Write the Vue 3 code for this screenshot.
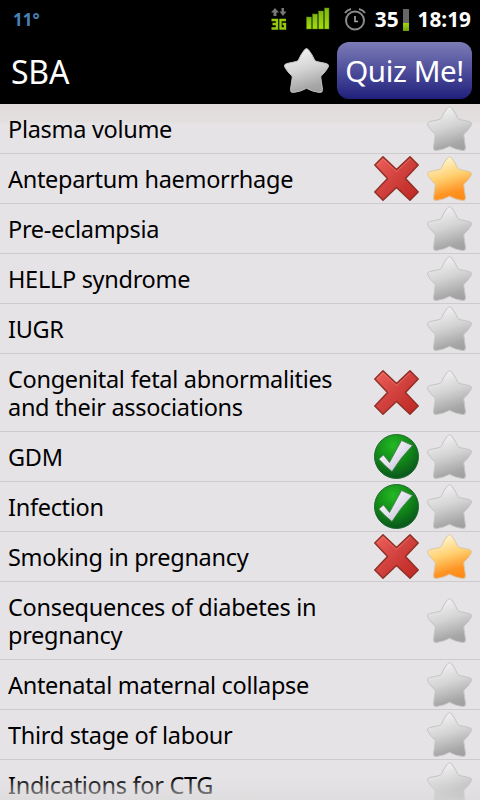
<script setup>
import { ref } from 'vue';

const temperature = ref('11°');
const battery = ref(35);
const title = ref('SBA');

const topics = ref([
  { id: 1, name: 'Plasma volume', result: null, starred: false },
  { id: 2, name: 'Antepartum haemorrhage', result: 'wrong', starred: true },
  { id: 3, name: 'Pre-eclampsia', result: null, starred: false },
  { id: 4, name: 'HELLP syndrome', result: null, starred: false },
  { id: 5, name: 'IUGR', result: null, starred: false },
  { id: 6, name: 'Congenital fetal abnormalities and their associations', result: 'wrong', starred: false },
  { id: 7, name: 'GDM', result: 'right', starred: false },
  { id: 8, name: 'Infection', result: 'right', starred: false },
  { id: 9, name: 'Smoking in pregnancy', result: 'wrong', starred: true },
  { id: 10, name: 'Consequences of diabetes in pregnancy', result: null, starred: false },
  { id: 11, name: 'Antenatal maternal collapse', result: null, starred: false },
  { id: 12, name: 'Third stage of labour', result: null, starred: false },
  { id: 13, name: 'Indications for CTG', result: null, starred: false }
]);

const toggleStar = (topic) => {
  topic.starred = !topic.starred;
};
</script>

<template>
  <div class="screen">
    <!-- shared gradients and shapes -->
    <svg class="defs" width="0" height="0">
      <defs>
        <linearGradient id="silver" x1="0.35" y1="0" x2="0.65" y2="1">
          <stop offset="0" stop-color="#f4f4f4" />
          <stop offset="0.45" stop-color="#d4d4d4" />
          <stop offset="0.85" stop-color="#a8a8a8" />
          <stop offset="1" stop-color="#a0a0a0" />
        </linearGradient>
        <linearGradient id="gold" x1="0.35" y1="0" x2="0.65" y2="1">
          <stop offset="0" stop-color="#fff8d8" />
          <stop offset="0.45" stop-color="#ffd070" />
          <stop offset="0.8" stop-color="#ff9424" />
          <stop offset="1" stop-color="#ff8a18" />
        </linearGradient>
        <linearGradient id="red" x1="0" y1="0" x2="1" y2="1">
          <stop offset="0" stop-color="#f0625e" />
          <stop offset="0.5" stop-color="#d0403c" />
          <stop offset="1" stop-color="#bd2622" />
        </linearGradient>
        <radialGradient id="green" cx="0.42" cy="0.25" r="0.72">
          <stop offset="0" stop-color="#24b824" />
          <stop offset="0.55" stop-color="#128a18" />
          <stop offset="1" stop-color="#0a5a1c" />
        </radialGradient>
        <linearGradient id="tick" x1="0" y1="0" x2="1" y2="1">
          <stop offset="0" stop-color="#ffffff" />
          <stop offset="0.5" stop-color="#e4e2ee" />
          <stop offset="1" stop-color="#b4b0c4" />
        </linearGradient>
        <linearGradient id="bars" x1="0" y1="0" x2="0" y2="1">
          <stop offset="0" stop-color="#7fb80e" />
          <stop offset="1" stop-color="#a5dd08" />
        </linearGradient>
        <symbol id="star" viewBox="0 0 45 45">
          <path d="M20.300 2Q22.500 -0.800 24.700 2Q28.500 7 30.500 11.800Q31.200 13.300 33 13.600L42.500 15.600Q45.800 16.600 44 19.500Q41.500 24 37.600 27.500Q36.500 28.500 36.800 30L38.500 41.500Q38.700 44.800 35.500 44.500Q28 43.500 22.500 40.300Q17 43.500 9.500 44.500Q6.300 44.800 6.500 41.500L8.200 30Q8.500 28.500 7.400 27.500Q3.500 24 1 19.500Q-0.800 16.600 2.500 15.600L12 13.600Q13.800 13.300 14.500 11.800Q16.500 7 20.300 2Z" stroke-width="1" />
        </symbol>
      </defs>
    </svg>

    <div class="status-bar">
      <span class="temperature">{{ temperature }}</span>
      <div class="status-icons">
        <svg class="network" width="16" height="23" viewBox="0 0 16 23">
          <path fill="#777" d="M4 0L8 4.500H5.500V8H2.500V4.500H0ZM8.500 3.500H10.500V0H13V3.500H15.500L12 8Z" />
          <g fill="none" stroke="#94c90f" stroke-width="2.400">
            <path d="M0.500 12H6V20.500H0.500M1.500 16H6" />
            <path d="M15 12H9.500V20.500H14V16H11.500" />
          </g>
        </svg>
        <svg class="signal" width="26" height="24" viewBox="0 0 26 24">
          <g fill="url(#bars)" stroke="#4b7a08" stroke-width="0.500">
            <rect x="1.500" y="10" width="5" height="12" />
            <rect x="7.500" y="7" width="5" height="15" />
            <rect x="13.500" y="4" width="5" height="18" />
            <rect x="19.500" y="1" width="4.500" height="21" />
          </g>
        </svg>
        <svg class="alarm" width="22" height="23" viewBox="0 0 22 23" fill="none" stroke="#8b8b8b">
          <circle cx="11" cy="12.500" r="9" stroke-width="2" />
          <path d="M11 8V13.500H14" stroke="#aaa" stroke-width="1.600" />
          <path d="M1 5Q3 2 7 1M21 5Q19 2 15 1" stroke-width="2" />
        </svg>
        <span class="battery-text">{{ battery }}</span>
        <div class="battery">
          <div class="battery-level" :style="{ height: battery + '%' }"></div>
        </div>
        <span class="clock">18:19</span>
      </div>
    </div>

    <div class="header">
      <h1 class="title">{{ title }}</h1>
      <svg class="icon silver"><use href="#star" /></svg>
      <button class="quiz-button">Quiz Me!</button>
    </div>

    <div class="topic-list">
      <div v-for="topic in topics" :key="topic.id" class="topic">
        <div class="topic-name">{{ topic.name }}</div>
        <svg v-if="topic.result === 'wrong'" class="icon" viewBox="0 0 45 45">
          <path fill="url(#red)" stroke="#8f3026" stroke-width="1.500" stroke-linejoin="round" d="M9 0.800L22.500 13.500L36 0.800L44.200 9L31.500 22.500L44.200 36L36 44.200L22.500 31.500L9 44.200L0.800 36L13.500 22.500L0.800 9Z" />
          <path fill="none" stroke="#f08a80" stroke-opacity="0.500" d="M3 9L9 3L22.500 15.500L36 3" />
        </svg>
        <svg v-if="topic.result === 'right'" class="icon" viewBox="0 0 45 45">
          <circle cx="22.500" cy="22.500" r="22" fill="url(#green)" stroke="#1c6a2c" />
          <path fill="url(#tick)" stroke="#4a7a50" stroke-width="0.800" d="M4.800 25L9.500 21L15.500 28.500L27.500 6.500L38.500 11.500Q27 23 18 37.500Q11 32 4.800 25Z" />
        </svg>
        <svg class="icon" :class="topic.starred ? 'gold' : 'silver'" @click="toggleStar(topic)">
          <use href="#star" />
        </svg>
      </div>
      <div class="fade"></div>
    </div>
  </div>
</template>

<style>
body {
  margin: 0;
  background-color: #000;
}
</style>

<style scoped>
.screen {
  width: 480px;
  height: 800px;
  display: flex;
  flex-direction: column;
  overflow: hidden;
  background-color: #000;
  font-family: "Noto Sans", "Open Sans", sans-serif;
}

.defs {
  position: absolute;
}

.status-bar {
  display: flex;
  align-items: center;
  justify-content: space-between;
  height: 38px;
  padding: 0 9px 0 13px;
  box-sizing: border-box;
  color: #fff;
}

.temperature {
  font-size: 17px;
  font-weight: 700;
  color: #4682b8;
}

.status-icons {
  display: flex;
  align-items: center;
  font-size: 20.8px;
  font-weight: 700;
}

.network {
  margin-right: 18px;
}

.signal {
  margin-right: 13px;
}

.alarm {
  margin-right: 9px;
}

.battery {
  display: flex;
  align-items: flex-end;
  width: 6px;
  height: 22px;
  margin: 2px 9px 0 4px;
  background-color: #666;
}

.battery-level {
  width: 100%;
  background: linear-gradient(#a0d80c, #6f9f08);
}

.header {
  display: flex;
  align-items: center;
  height: 66px;
  padding: 0 8px 0 11px;
  box-sizing: border-box;
}

.header .icon {
  margin-top: -1px;
}

.title {
  flex: 1;
  margin: 2px 0 0;
  font-size: 32px;
  font-weight: 400;
  line-height: 40px;
  letter-spacing: -0.2px;
  color: #fff;
}

.quiz-button {
  width: 135px;
  height: 57px;
  margin: -1px 0 0 8px;
  padding: 0;
  border: none;
  border-radius: 12px;
  background: linear-gradient(#7c7cb6, #4e4e9c 50%, #20207c);
  color: #fff;
  font-family: inherit;
  font-size: 29.5px;
  letter-spacing: -0.4px;
  white-space: nowrap;
}

.topic-list {
  flex: 1;
  position: relative;
  overflow: hidden;
  background: linear-gradient(#e1dcdb, #e3dfdf 18px, #e6e3e7 19px);
}

.topic {
  display: flex;
  align-items: center;
  gap: 8px;
  padding: 2px 8px;
  border-bottom: 1px solid #cdcbce;
}

.topic-name {
  flex: 1;
  max-width: 350px;
  margin: -2px auto -2px 0;
  padding: 11px 0 10px;
  font-size: 23.5px;
  line-height: 28px;
  letter-spacing: -0.3px;
  color: #000;
}

.icon {
  flex: none;
  width: 45px;
  height: 45px;
}

.silver {
  fill: url(#silver);
  stroke: #c4c4c4;
}

.gold {
  fill: url(#gold);
  stroke: #d8c8a8;
}

.fade {
  position: absolute;
  left: 0;
  right: 0;
  bottom: 0;
  height: 20px;
  background: linear-gradient(rgba(220, 217, 217, 0.1), rgba(220, 219, 219, 0.75));
  pointer-events: none;
}
</style>
